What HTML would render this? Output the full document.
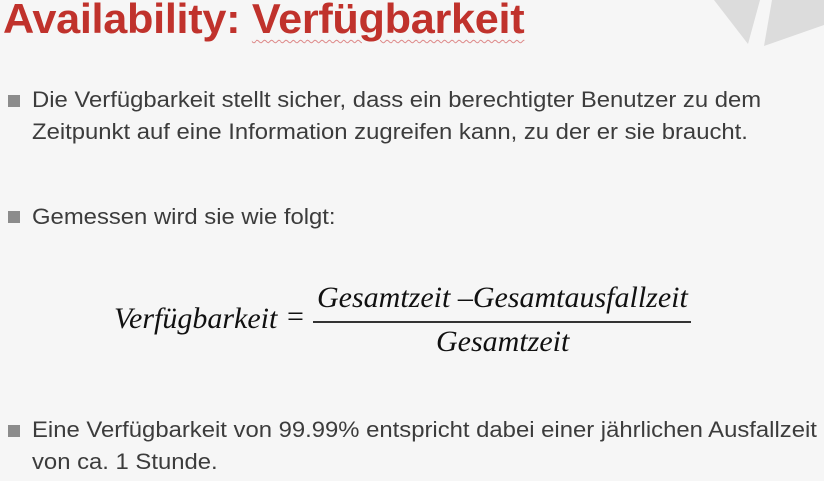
<!DOCTYPE html>
<html><head><meta charset="utf-8"><style>
html,body{margin:0;padding:0}
body{width:824px;height:481px;background:#f6f6f6;position:relative;overflow:hidden;font-family:"Liberation Sans",sans-serif}
.t{position:absolute;left:3px;top:-5px;font-size:42px;font-weight:bold;color:#c0322c;white-space:nowrap;letter-spacing:-0.3px;transform:scaleX(1.03);transform-origin:0 0}
.t u{text-decoration:underline;text-decoration-style:wavy;text-decoration-color:#d88;text-decoration-thickness:1px;text-underline-offset:6px}
.b{position:absolute;left:32px;font-size:22.5px;color:#3c3c3c;line-height:32px;white-space:nowrap;transform:scaleX(1.06);transform-origin:0 0}
.sq{position:absolute;left:8px;width:12px;height:12px;background:#8c8c8c}
.f{position:absolute;font-family:"Liberation Serif",serif;font-style:italic;font-size:30px;color:#111;white-space:nowrap}
</style></head><body>
<svg style="position:absolute;left:700px;top:0" width="124" height="60"><polygon points="14,0 60,0 48,44" fill="#dcdcdc"/><polygon points="72,0 124,0 124,25 64,46" fill="#dcdcdc"/></svg>
<div class="t">Availability: <u>Verfügbarkeit</u></div>
<div class="sq" style="top:95px"></div>
<div class="b" style="top:84px">Die Verfügbarkeit stellt sicher, dass ein berechtigter Benutzer zu dem<br>Zeitpunkt auf eine Information zugreifen kann, zu der er sie braucht.</div>
<div class="sq" style="top:211px"></div>
<div class="b" style="top:201px">Gemessen wird sie wie folgt:</div>
<div class="f" style="left:114px;top:302px">Verfügbarkeit</div>
<div class="f" style="left:287px;top:300px;font-style:normal">=</div>
<div class="f" style="left:317px;top:281px">Gesamtzeit –Gesamtausfallzeit</div>
<div style="position:absolute;left:313px;top:321px;width:378px;height:1.5px;background:#333"></div>
<div class="f" style="left:436px;top:325px">Gesamtzeit</div>
<div class="sq" style="top:425px"></div>
<div class="b" style="top:414px">Eine Verfügbarkeit von 99.99% entspricht dabei einer jährlichen Ausfallzeit<br>von ca. 1 Stunde.</div>
</body></html>
